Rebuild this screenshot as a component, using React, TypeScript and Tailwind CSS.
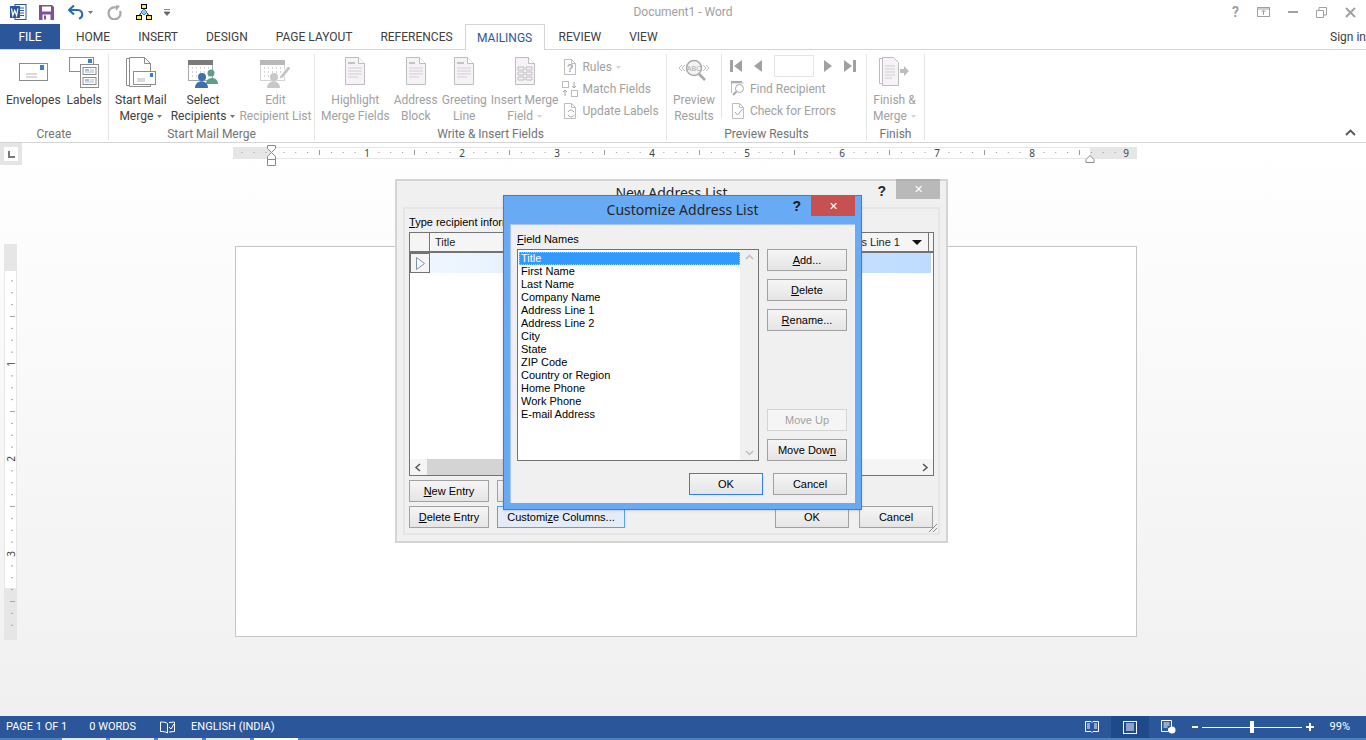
import type { ReactNode } from "react";

const tabs = ["HOME", "INSERT", "DESIGN", "PAGE LAYOUT", "REFERENCES"];
const fields = [
  "First Name", "Last Name", "Company Name", "Address Line 1", "Address Line 2", "City", "State",
  "ZIP Code", "Country or Region", "Home Phone", "Work Phone", "E-mail Address",
];

function Caret({ className = "text-neutral-500" }: { className?: string }) {
  return (
    <svg width="5" height="3" viewBox="0 0 5 3" className={`inline-block ml-1 align-middle ${className}`}>
      <path d="M0 0h5L2.5 3z" fill="currentColor" />
    </svg>
  );
}

function WordLogo() {
  return (
    <svg width="17" height="16" viewBox="0 0 17 16">
      <rect x="5" y="0.5" width="11" height="15" fill="#fff" stroke="#2b579a" />
      <path d="M10 4h4M10 6.5h4M10 9h4M10 11.5h4" stroke="#2b579a" />
      <rect x="0" y="2" width="10" height="12" fill="#2b579a" />
      <path d="M1.5 4.5l1.3 7 1.9-5 1.9 5 1.3-7" fill="none" stroke="#fff" strokeWidth="1.2" />
    </svg>
  );
}

function SaveIcon() {
  return (
    <svg width="15" height="15" viewBox="0 0 15 15">
      <path d="M0 0h13l2 2v13H0z" fill="#7d4f9e" />
      <rect x="3" y="1.5" width="9" height="5" fill="#fff" />
      <rect x="3.5" y="9.5" width="8" height="5.5" fill="#fff" />
      <rect x="5" y="10.5" width="2" height="4" fill="#7d4f9e" />
    </svg>
  );
}

function UndoIcon() {
  return (
    <svg width="16" height="15" viewBox="0 0 16 15" fill="none">
      <path d="M2 5h8a4.5 4.5 0 0 1 1 8.800" stroke="#2b6cb0" strokeWidth="2.200" />
      <path d="M6 0.500L1 5l5 4.500" stroke="#2b6cb0" strokeWidth="2.200" />
    </svg>
  );
}

function RedoIcon() {
  return (
    <svg width="15" height="15" viewBox="0 0 15 15" fill="none">
      <path d="M9 2.500a6 6 0 1 0 4 3.500" stroke="#a8a8a8" strokeWidth="2.200" />
      <path d="M9 0v6l4-5z" fill="#a8a8a8" />
    </svg>
  );
}

function TreeIcon() {
  return (
    <svg width="16" height="16" viewBox="0 0 16 16">
      <path d="M8 4v2M5 9l-2 3M11 9l2 3" stroke="#000" />
      <rect x="5.500" y="0.500" width="5" height="4" fill="#ffe94a" stroke="#000" />
      <path d="M8 5l3 3-3 3-3-3z" fill="#7fd4f0" stroke="#3a7fb0" />
      <rect x="0.500" y="11.500" width="5" height="4" fill="#ffe94a" stroke="#000" />
      <rect x="10.500" y="11.500" width="5" height="4" fill="#ffe94a" stroke="#000" />
    </svg>
  );
}

function Envelope() {
  return (
    <svg width="32" height="32" viewBox="0 0 32 32">
      <rect x="2.500" y="7.500" width="28" height="17" fill="#fff" stroke="#8c8c8c" />
      <rect x="23" y="9" width="4" height="5" fill="#3f7fc1" />
      <path d="M9 18h11M9 21h11" stroke="#b5b5b5" />
    </svg>
  );
}

function LabelsIcon() {
  return (
    <svg width="32" height="32" viewBox="0 0 32 32">
      <rect x="1.500" y="1.500" width="24" height="14" fill="#fff" stroke="#8c8c8c" />
      <rect x="20" y="3" width="4" height="4" fill="#3f7fc1" />
      <rect x="12.500" y="8.500" width="18" height="23" fill="#fff" stroke="#8c8c8c" />
      <rect x="15" y="11.500" width="13" height="7" fill="#fff" stroke="#8c8c8c" />
      <rect x="15" y="21.500" width="13" height="7" fill="#fff" stroke="#8c8c8c" />
      <path d="M17 14h4M17 24h4" stroke="#3f7fc1" />
      <path d="M22 14h4M17 16h9M22 24h4M17 26h9" stroke="#b5b5b5" />
    </svg>
  );
}

function MergeIcon() {
  return (
    <svg width="32" height="32" viewBox="0 0 32 32">
      <path d="M1.500 2.500h14v27h-14z" fill="#fff" stroke="#8c8c8c" />
      <path d="M4.500 1.500h15l6 6v23h-21z" fill="#fff" stroke="#8c8c8c" />
      <path d="M19.500 1.500v6h6" fill="none" stroke="#8c8c8c" />
      <rect x="8.500" y="15.500" width="22" height="13" fill="#fff" stroke="#8c8c8c" />
      <rect x="25" y="17" width="3" height="4" fill="#3f7fc1" />
      <path d="M12 23h8M12 25h8" stroke="#b5b5b5" />
    </svg>
  );
}

function RecipientsIcon({ off = false }: { off?: boolean }) {
  const a = off ? "#c8c8c8" : "#3f6fae";
  const b = off ? "#d4d4d4" : "#5f9c8c";
  return (
    <svg width="32" height="32" viewBox="0 0 32 32">
      <rect x="1.500" y="4.500" width="24" height="20" fill="#fff" stroke={off ? "#d4d4d4" : "#a8a8a8"} />
      <rect x="1" y="4" width="25" height="5" fill={off ? "#b8b8b8" : "#7a7a7a"} />
      <path d="M5 12h18M5 16h18M5 20h18" stroke="#a8a8a8" strokeDasharray="1 3" />
      {off ? (
        <path d="M21 20l8-10 3 2-8 10-4 1z" fill="#c4c4c4" stroke="#fff" />
      ) : (
        <>
          <circle cx="24" cy="17" r="3.500" fill={b} />
          <path d="M18 30c0-8 12-8 12 0z" fill={b} transform="translate(1,-2)" />
        </>
      )}
      <circle cx="15" cy="21" r="4" fill={a} />
      <path d="M8 32c0-9 13-9 13 0z" fill={a} />
    </svg>
  );
}

function DocIcon({ kind }: { kind: "lines" | "block" | "grid" }) {
  return (
    <svg width="32" height="32" viewBox="0 0 32 32">
      <path d="M6.500 1.500h13l6 6v21h-19z" fill="#f6f2f7" stroke="#bdbdbd" />
      <path d="M19.500 1.500v6h6" fill="#fff" stroke="#bdbdbd" />
      {kind === "grid" ? (
        <path d="M9 11h6v3H9zM17 11h6v3h-6zM9 16h6v3H9zM17 16h6v3h-6zM9 21h6v3H9zM17 21h6v3h-6z" fill="none" stroke="#bdbdbd" />
      ) : (
        <>
          <rect x="9" y="6" width={kind === "block" ? 6 : 7} height="2" fill="#c4c4c4" />
          <path d="M9 12h14M9 15h14M9 18h14M9 21h10" stroke="#cfcfcf" />
        </>
      )}
    </svg>
  );
}

function PreviewIcon() {
  return (
    <svg width="32" height="32" viewBox="0 0 32 32" fill="none">
      <path d="M4 9l-3 3 3 3M7 9l-3 3 3 3M28 9l3 3-3 3M25 9l3 3-3 3" stroke="#bdbdbd" />
      <circle cx="16" cy="12" r="7.500" fill="#f4f4f4" stroke="#a8a8a8" strokeWidth="1.500" />
      <path d="M21 18l6 6" stroke="#a8a8a8" strokeWidth="2.500" />
      <text x="16" y="14.500" textAnchor="middle" fontSize="7" fill="#a8a8a8" fontFamily="Liberation Sans, sans-serif">ABC</text>
    </svg>
  );
}

function FinishIcon() {
  return (
    <svg width="32" height="32" viewBox="0 0 32 32">
      <path d="M1.500 2.500h12v25h-12z" fill="#fff" stroke="#bdbdbd" />
      <path d="M4.500 1.500h11l5 5v23h-16z" fill="#f6f2f7" stroke="#bdbdbd" />
      <path d="M7 10h10M7 13h10M7 16h10M7 19h10M7 22h7" stroke="#cfcfcf" />
      <path d="M22 13h4v-3l5 5-5 5v-3h-4z" fill="#bdbdbd" />
    </svg>
  );
}

function SmallIcon({ kind }: { kind: "rules" | "match" | "update" | "find" | "check" }) {
  const c = "#bdbdbd";
  return (
    <svg width="16" height="16" viewBox="0 0 16 16" fill="none">
      {kind === "match" ? (
        <>
          <rect x="0.500" y="0.500" width="6" height="6" stroke={c} />
          <rect x="9.500" y="9.500" width="6" height="6" stroke={c} />
          <path d="M12 1v6M3 9v6M10 5l2 2 2-2M1 11l2-2 2 2" stroke="#a8a8a8" />
        </>
      ) : kind === "find" ? (
        <>
          <path d="M1 1h11" stroke="#a8a8a8" strokeWidth="2" />
          <path d="M1.500 2v10M1.500 2h12" stroke={c} />
          <circle cx="9.500" cy="7.500" r="4" fill="#fff" stroke="#a8a8a8" />
          <path d="M6.500 10.500L3 14" stroke="#a8a8a8" strokeWidth="2" />
        </>
      ) : (
        <>
          <path d="M2.500 0.500h7l4 4v11h-11z" fill="#fff" stroke={c} />
          <path d="M9.500 0.500v4h4" stroke={c} />
          {kind === "rules" && <text x="8" y="13" textAnchor="middle" fontSize="11" fontWeight="700" fill="#a8a8a8" fontFamily="Liberation Sans, sans-serif">?</text>}
          {kind === "update" && <path d="M6 9a3 3 0 0 1 5-1l1 1M12 12a3 3 0 0 1-5 1l-1-1" stroke="#a8a8a8" />}
          {kind === "check" && <path d="M5 9l2.500 3 5-6" stroke="#a8a8a8" />}
        </>
      )}
    </svg>
  );
}

function Big({ icon, lines, off = false, caret = false }: { icon: ReactNode; lines: string[]; off?: boolean; caret?: boolean }) {
  return (
    <div className={`flex flex-col items-center text-center leading-4 ${off ? "text-neutral-400" : "text-neutral-700"}`}>
      <div className="h-8 mt-0.5 mb-1">{icon}</div>
      <span className="whitespace-nowrap">{lines[0]}</span>
      <span className="whitespace-nowrap">
        {lines[1]}
        {caret && <Caret className={off ? "text-neutral-300" : "text-neutral-500"} />}
      </span>
    </div>
  );
}

function Small({ icon, label, caret = false }: { icon: ReactNode; label: string; caret?: boolean }) {
  return (
    <div className="flex items-center gap-1 h-5.5 text-neutral-400 whitespace-nowrap">
      {icon}
      <span>
        {label}
        {caret && <Caret className="text-neutral-300" />}
      </span>
    </div>
  );
}

function Group({ label, width, children }: { label: string; width: string; children: ReactNode }) {
  return (
    <div className={`flex flex-col border-r border-neutral-200 ${width}`}>
      <div className="flex gap-1 px-1.5 h-18">{children}</div>
      <div className="mt-auto h-3 text-center leading-3 text-neutral-500 whitespace-nowrap">{label}</div>
    </div>
  );
}

function Ruler() {
  const marks = [];
  for (let i = 0; i < 72; i++) {
    const x = 39 + (i * 95) / 8;
    if (i % 8 === 0) continue;
    marks.push(<path key={i} d={i % 4 === 0 ? `M${x} 4v5` : `M${x} 6v1`} stroke="#9a9a9a" />);
  }
  return (
    <svg width="904" height="24" viewBox="0 0 904 24" className="block">
      <rect x="0" y="4" width="904" height="12" fill="#fff" />
      <rect x="0" y="4" width="39" height="12" fill="#e6e6e6" />
      <rect x="857" y="4" width="47" height="12" fill="#e6e6e6" />
      <path d="M0 4.500h904M0 15.500h904" stroke="#e6e6e6" />
      <g transform="translate(0,3)">
        {[9, 21, 33].map((x) => <path key={x} d={`M${x} 6v1`} stroke="#9a9a9a" />)}
        {marks}
      </g>
      {[1, 2, 3, 4, 5, 6, 7, 8, 9].map((n) => (
        <text key={n} x={39 + 95 * n - (n === 9 ? 1 : 0)} y="14" textAnchor="middle" fontSize="10" fill="#444" fontFamily="Noto Sans, sans-serif">{n}</text>
      ))}
      <path d="M34.500 2.500h8v3l-4 4-4-4zM38.500 9.500l4 4v3h-8v-3zM34.500 16.500h8v6h-8z" fill="#fff" stroke="#8a8a8a" />
      <path d="M857 12.500l4 4v3h-8v-3z" fill="#fff" stroke="#8a8a8a" />
    </svg>
  );
}

function SideRuler() {
  const ticks = [];
  for (let i = 1; i < 31; i++) {
    const y = 25 + (i * 95) / 8;
    if (i % 8 === 0) continue;
    ticks.push(<path key={i} d={i % 4 === 0 ? `M6 ${y}h5` : `M7 ${y}h2`} stroke="#a8a8a8" />);
  }
  return (
    <svg width="13" height="396" viewBox="0 0 13 396" className="block">
      <rect width="13" height="396" fill="#e6e6e6" />
      <rect x="1" y="27" width="11" height="317" fill="#fff" />
      {ticks}
      {[1, 2, 3].map((n) => (
        <text key={n} transform={`translate(11,${25 + 95 * n}) rotate(-90)`} textAnchor="middle" fontSize="10" fill="#444" fontFamily="Noto Sans, sans-serif">{n}</text>
      ))}
    </svg>
  );
}

function Btn({ children, className = "", off = false }: { children: ReactNode; className?: string; off?: boolean }) {
  return (
    <div
      className={`h-5.5 flex items-center justify-center border whitespace-nowrap ${
        off ? "border-neutral-300 text-neutral-400 bg-neutral-100" : "border-neutral-400 text-black bg-linear-to-b from-neutral-100 to-neutral-200"
      } ${className}`}
    >
      {children}
    </div>
  );
}

function BackDialog() {
  return (
    <div className="absolute left-[395px] top-[179px] w-[553px] h-[364px] border-2 border-neutral-300 bg-[#f0f0f0] flex flex-col px-1.5 pb-1.5 text-[11px] font-['Liberation_Sans',sans-serif]">
      <div className="h-6.5 grid grid-cols-[1fr_auto_1fr]">
        <div />
        <div className="text-sm text-neutral-800 pt-0.5 font-['Noto_Sans',sans-serif] whitespace-nowrap">New Address List</div>
        <div className="flex justify-end items-start">
          <div className="font-bold text-sm mr-2.5 text-neutral-800">?</div>
          <div className="w-11 h-5 -mt-0.5 bg-neutral-400/70 text-white text-center leading-5">✕</div>
        </div>
      </div>
      <div className="flex-1 border-2 border-neutral-200 flex flex-col px-1 relative">
        <div className="h-5.5 mt-px pt-1 leading-4 text-black"><u>T</u>ype recipient information</div>
        <div className="h-61 border border-neutral-500 bg-white flex flex-col">
          <div className="flex h-5 border-b-2 border-neutral-500 bg-neutral-100">
            <div className="w-5 border-r border-neutral-500" />
            <div className="flex-1 pl-1 text-neutral-800 border-l border-white flex items-center">Title</div>
            <div className="flex items-center gap-3 pr-1.5 border-r border-neutral-500 text-neutral-800">
              Address Line 1
              <svg width="10" height="5" viewBox="0 0 10 5"><path d="M0 0h10L5 5z" fill="#111" /></svg>
            </div>
            <div className="w-1" />
          </div>
          <div className="flex h-5 pr-0.5">
            <div className="w-5 flex items-center justify-center border border-neutral-500 bg-neutral-100">
              <svg width="9" height="13" viewBox="0 0 9 13"><path d="M0.500 0.500l8 6-8 6z" fill="#fff" stroke="#7a93b0" /></svg>
            </div>
            <div className="flex-1 bg-linear-to-r from-blue-50 to-blue-200" />
          </div>
          <div className="flex-1" />
          <div className="h-4 bg-neutral-100 flex items-center text-neutral-500">
            <svg width="17" height="9" viewBox="0 0 17 9" fill="none"><path d="M10 1L6 4.500 10 8" stroke="#555" strokeWidth="1.500" /></svg>
            <div className="w-20 h-4 bg-neutral-300" />
            <div className="flex-1" />
            <svg width="17" height="9" viewBox="0 0 17 9" fill="none"><path d="M7 1l4 3.500L7 8" stroke="#555" strokeWidth="1.500" /></svg>
          </div>
        </div>
        <div className="flex gap-2 mt-1">
          <Btn className="w-20"><span><u>N</u>ew Entry</span></Btn>
          <Btn className="w-20"><span>Find...</span></Btn>
        </div>
        <div className="flex gap-2 mt-1 pr-px">
          <Btn className="w-20"><span><u>D</u>elete Entry</span></Btn>
          <div className="h-5.5 w-32 flex items-center justify-center border border-blue-400 bg-blue-100/60 text-black whitespace-nowrap">
            <span>Customi<u>z</u>e Columns...</span>
          </div>
          <div className="flex-1" />
          <Btn className="w-18.5">OK</Btn>
          <Btn className="w-18.5 ml-0.5">Cancel</Btn>
        </div>
        <svg width="10" height="10" viewBox="0 0 10 10" className="absolute right-0 bottom-0">
          <path d="M9 1L1 9M9 5L5 9" stroke="#8a8a8a" />
        </svg>
      </div>
    </div>
  );
}

function FrontDialog() {
  return (
    <div className="absolute left-[503px] top-[195px] w-[359px] h-[315px] border border-blue-500 bg-[#69aaf5] flex flex-col px-1.5 pb-1.5 text-[11px] shadow-sm font-['Liberation_Sans',sans-serif]">
      <div className="h-7 grid grid-cols-[1fr_auto_1fr] shrink-0">
        <div />
        <div className="text-sm text-neutral-800 whitespace-nowrap pt-1 font-['Noto_Sans',sans-serif]">Customize Address List</div>
        <div className="flex justify-end items-start">
          <div className="font-bold text-sm text-neutral-900 mr-2.5 leading-5">?</div>
          <div className="w-11 h-5 bg-[#c75050] text-white text-center leading-5">✕</div>
        </div>
      </div>
      <div className="flex-1 bg-[#f0f0f0] border-t border-l border-blue-600/30 flex flex-col px-1.5 pb-2">
        <div className="flex flex-1 gap-2">
          <div className="flex flex-col w-[242px]">
            <div className="h-6 pt-1.5 leading-4 text-black"><u>F</u>ield Names</div>
            <div className="h-[212px] border border-neutral-500 bg-white flex">
              <div className="flex-1 pl-px pt-px leading-[13px] text-black">
                <div className="bg-[#3399ff] text-white outline-1 outline-dotted outline-orange-300 -outline-offset-1 pl-0.5 mt-px">Title</div>
                {fields.map((f) => (
                  <div key={f} className="pl-0.5">{f}</div>
                ))}
              </div>
              <div className="w-4.5 bg-[#f0f0f0] flex flex-col items-center justify-between py-1">
                <svg width="9" height="6" viewBox="0 0 9 6" fill="none"><path d="M1 5l3.500-3.500L8 5" stroke="#bdbdbd" strokeWidth="1.500" /></svg>
                <svg width="9" height="6" viewBox="0 0 9 6" fill="none"><path d="M1 1l3.500 3.500L8 1" stroke="#bdbdbd" strokeWidth="1.500" /></svg>
              </div>
            </div>
          </div>
          <div className="flex flex-col gap-2 w-20 h-59 pt-6">
            <Btn><span><u>A</u>dd...</span></Btn>
            <Btn><span><u>D</u>elete</span></Btn>
            <Btn><span><u>R</u>ename...</span></Btn>
            <div className="flex-1" />
            <Btn off>Move Up</Btn>
            <Btn><span>Move Dow<u>n</u></span></Btn>
          </div>
        </div>
        <div className="flex justify-end gap-2.5 pr-0.5">
          <Btn className="w-18.5 border-blue-500!">OK</Btn>
          <Btn className="w-18.5">Cancel</Btn>
        </div>
      </div>
    </div>
  );
}

function StatusBar() {
  return (
    <div className="h-5.5 bg-[#2b579a] text-white text-[11px] flex items-center pl-1.5 shrink-0">
      <span className="mr-5.5">PAGE 1 OF 1</span>
      <span className="mr-6">0 WORDS</span>
      <svg width="15" height="13" viewBox="0 0 15 13" fill="none" className="mr-4">
        <path d="M7.500 2.500C6 1 3 1 0.500 1v9.500c2.500 0 5 0 7 1.500V2.500zM9 1.500l5.500-.5v9.500l-5.500.5" stroke="#fff" />
        <path d="M9 6l2 2 3-5" stroke="#fff" />
      </svg>
      <span>ENGLISH (INDIA)</span>
      <div className="flex-1" />
      <svg width="14" height="14" viewBox="0 0 14 14" fill="none" className="mr-3">
        <path d="M0.500 1.500h5.500l1 1 1-1h5.500v10h-5.500l-1 1-1-1H0.500z" stroke="#fff" />
        <path d="M2 4h3M2 6h3M2 8h3M9 4h3M9 6h3M9 8h3" stroke="#fff" />
      </svg>
      <div className="w-9.5 h-5.5 bg-[#1e4a8c] flex items-center justify-center">
        <svg width="14" height="13" viewBox="0 0 14 13" fill="none">
          <rect x="0.500" y="0.500" width="13" height="12" stroke="#fff" />
          <path d="M3 3h8M3 5h8M3 7h8M3 9h8" stroke="#fff" />
        </svg>
      </div>
      <svg width="15" height="14" viewBox="0 0 15 14" fill="none" className="ml-3 mr-4">
        <path d="M0.500 0.500h10v8h-3v3h-7z" stroke="#fff" />
        <path d="M2.500 3h6M2.500 5h6M2.500 7h4" stroke="#fff" />
        <circle cx="11" cy="10" r="3.500" fill="#fff" />
      </svg>
      <div className="w-1.5 h-0.5 bg-white mr-1" />
      <div className="w-25 h-px bg-white relative">
        <div className="absolute left-12 -top-1.5 w-1 h-3 bg-white" />
      </div>
      <svg width="8" height="8" viewBox="0 0 8 8" className="ml-1"><path d="M3 0h2v3h3v2H5v3H3V5H0V3h3z" fill="#fff" /></svg>
      <span className="ml-4 mr-4">99%</span>
    </div>
  );
}

export default function App() {
  return (
    <div className="relative h-[740px] w-[1366px] overflow-hidden flex flex-col bg-white text-xs font-['Roboto',sans-serif]">
      <div className="h-6 grid grid-cols-3 items-center shrink-0">
        <div className="flex items-center pl-2.5">
          <WordLogo />
          <div className="ml-3"><SaveIcon /></div>
          <div className="ml-3.5"><UndoIcon /></div>
          <Caret />
          <div className="ml-3.5"><RedoIcon /></div>
          <div className="ml-3.5"><TreeIcon /></div>
          <svg width="6" height="7" viewBox="0 0 6 7" className="ml-3"><path d="M0 0.500h6M0 3h6L3 6.500z" stroke="#666" fill="#666" strokeWidth="0.800" /></svg>
        </div>
        <div className="text-center text-neutral-400">Document1 - Word</div>
        <div className="flex justify-end items-center gap-4.5 pr-2.5 text-neutral-400">
          <span className="font-bold text-sm">?</span>
          <svg width="13" height="10" viewBox="0 0 13 10" fill="none"><rect x="0.500" y="0.500" width="12" height="9" stroke="currentColor" /><path d="M6.500 8V4M4.500 5l2-2 2 2M1 2h11" stroke="currentColor" /></svg>
          <div className="w-2.5 h-0.5 bg-neutral-400" />
          <svg width="11" height="11" viewBox="0 0 11 11" fill="none"><path d="M0.500 3.500h7v7h-7zM3 3V0.500h7.500V8H8" stroke="currentColor" /></svg>
          <svg width="11" height="11" viewBox="0 0 11 11" fill="none"><path d="M1 1l9 9M10 1l-9 9" stroke="currentColor" strokeWidth="2" /></svg>
        </div>
      </div>

      <div className="h-6.5 flex items-stretch border-b border-neutral-300 text-neutral-700 shrink-0 text-xs">
        <div className="w-15 bg-[#2b579a] text-white flex items-center justify-center">FILE</div>
        <div className="flex ml-0.5">
          {tabs.map((t) => (
            <div key={t} className="px-3.5 flex items-center whitespace-nowrap">{t}</div>
          ))}
        </div>
        <div className="-ml-0.5 w-20 -mb-px border border-b-0 border-neutral-300 bg-white text-[#2b579a] flex items-center justify-center">MAILINGS</div>
        <div className="px-3.5 flex items-center">REVIEW</div>
        <div className="px-3.5 flex items-center">VIEW</div>
        <div className="ml-auto flex items-center">Sign in</div>
      </div>

      <div className="h-[93px] flex pt-1 pb-0.5 border-b border-neutral-300 shrink-0 relative">
        <Group label="Create" width="w-[109px]">
          <Big icon={<Envelope />} lines={["Envelopes", ""]} />
          <div className="ml-0.5">
            <Big icon={<LabelsIcon />} lines={["Labels", ""]} />
          </div>
        </Group>
        <Group label="Start Mail Merge" width="w-[206px]">
          <Big icon={<MergeIcon />} lines={["Start Mail", "Merge"]} caret />
          <Big icon={<RecipientsIcon />} lines={["Select", "Recipients"]} caret />
          <Big icon={<RecipientsIcon off />} lines={["Edit", "Recipient List"]} off />
        </Group>
        <Group label="Write & Insert Fields" width="w-[352px]">
          <Big icon={<DocIcon kind="lines" />} lines={["Highlight", "Merge Fields"]} off />
          <Big icon={<DocIcon kind="block" />} lines={["Address", "Block"]} off />
          <Big icon={<DocIcon kind="lines" />} lines={["Greeting", "Line"]} off />
          <Big icon={<DocIcon kind="grid" />} lines={["Insert Merge", "Field"]} off caret />
          <div className="flex flex-col pt-0.5">
            <Small icon={<SmallIcon kind="rules" />} label="Rules" caret />
            <Small icon={<SmallIcon kind="match" />} label="Match Fields" />
            <Small icon={<SmallIcon kind="update" />} label="Update Labels" />
          </div>
        </Group>
        <Group label="Preview Results" width="w-[200px]">
          <div className="pr-1.5 h-16 border-r border-neutral-200">
            <Big icon={<PreviewIcon />} lines={["Preview", "Results"]} off />
          </div>
          <div className="flex flex-col pl-1">
            <div className="h-6 flex items-center gap-2 text-neutral-400">
              <svg width="12" height="12" viewBox="0 0 12 12"><path d="M0 0h3v12H0zM12 0v12L4 6z" fill="currentColor" /></svg>
              <svg width="8" height="12" viewBox="0 0 8 12" className="ml-1"><path d="M8 0v12L0 6z" fill="currentColor" /></svg>
              <div className="w-10 h-5.5 border border-neutral-200 ml-1" />
              <svg width="8" height="12" viewBox="0 0 8 12" className="ml-0.5"><path d="M0 0v12l8-6z" fill="currentColor" /></svg>
              <svg width="12" height="12" viewBox="0 0 12 12" className="ml-1"><path d="M12 0H9v12h3zM0 0v12l8-6z" fill="currentColor" /></svg>
            </div>
            <Small icon={<SmallIcon kind="find" />} label="Find Recipient" />
            <Small icon={<SmallIcon kind="check" />} label="Check for Errors" />
          </div>
        </Group>
        <Group label="Finish" width="w-[58px]">
          <Big icon={<FinishIcon />} lines={["Finish &", "Merge"]} off caret />
        </Group>
        <svg width="11" height="7" viewBox="0 0 11 7" fill="none" className="absolute right-2.5 bottom-1.5"><path d="M1 6l4.500-4.500L10 6" stroke="#555" strokeWidth="1.800" /></svg>
      </div>

      <div className="flex-1 flex flex-col bg-linear-to-b from-white to-[#f0f0f0] min-h-0">
        <div className="h-5.5 flex items-stretch">
          <div className="w-5.5 bg-neutral-200 flex items-center justify-center">
            <div className="w-3.5 h-3.5 bg-white flex items-center justify-center">
              <svg width="7" height="7" viewBox="0 0 7 7"><path d="M0 0h2v5h5v2H0z" fill="#7a7a7a" /></svg>
            </div>
          </div>
          <div className="ml-[211px]"><Ruler /></div>
        </div>
        <div className="flex-1 flex pl-1 pr-3 pt-20">
          <div className="w-3.5 -mt-px"><SideRuler /></div>
          <div className="mx-auto mt-px w-[902px] h-[391px] bg-white border border-[#c6c6c6]" />
        </div>
      </div>

      <StatusBar />
      <div className="h-0.5 bg-[#4f81bd] flex gap-1 pl-[62px] shrink-0">
        {[0, 1, 2, 3].map((i) => <div key={i} className="w-11 bg-neutral-200" />)}
        <div className="w-11 bg-white" />
      </div>

      <BackDialog />
      <FrontDialog />
    </div>
  );
}
